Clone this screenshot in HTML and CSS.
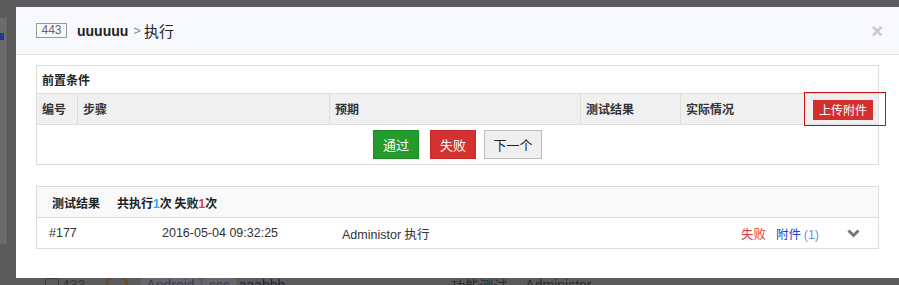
FILE: index.html
```html
<!DOCTYPE html>
<html>
<head>
<meta charset="utf-8">
<link rel="stylesheet" href="styles.css">
</head>
<body>
<div class="backdrop">
  <div class="topband"></div>
  <div class="main">
    <div class="sidebar"><div class="mark"></div></div>
    <div class="page">
      <div class="bgrow">
        <span class="chk"></span><span class="num">433</span>
        <span class="circ"></span>
        <span class="pill">Android</span><span class="pill small">ccc</span><span class="dark">aaabbb</span>
        <span class="type">功能测试</span><span class="who">Administor</span>
      </div>
    </div>
  </div>
</div>

<div class="dialog">
  <div class="dlg-head">
    <div class="title">
      <span class="badge">443</span>
      <span class="name">uuuuuu</span>
      <span class="sep">&gt;</span>
      <span class="act">执行</span>
    </div>
    <span class="close">×</span>
  </div>
  <div class="dlg-body">
    <div class="panel">
      <div class="cond">前置条件</div>
      <div class="thead">
        <div class="th">编号</div>
        <div class="th">步骤</div>
        <div class="th">预期</div>
        <div class="th">测试结果</div>
        <div class="th last">实际情况<span class="upload">上传附件</span><span class="annot"></span></div>
      </div>
      <div class="actions">
        <button class="btn pass">通过</button>
        <button class="btn fail">失败</button>
        <button class="btn next">下一个</button>
      </div>
    </div>

    <div class="panel results">
      <div class="rhead">
        <span class="rtitle">测试结果</span>
        <span class="rsum">共执行<b class="blue">1</b>次 失败<b class="red">1</b>次</span>
      </div>
      <div class="rrow">
        <span class="rid">#177</span>
        <span class="rdate">2016-05-04 09:32:25</span>
        <span class="ruser">Administor 执行</span>
        <span class="rstate">失败</span>
        <span class="ratt">附件 <span class="cnt">(1)</span></span>
        <svg class="chev" width="13" height="9" viewBox="0 0 13 9"><path d="M1.5 1.5 L6.5 6.5 L11.5 1.5" fill="none" stroke="#777" stroke-width="3"/></svg>
      </div>
    </div>
  </div>
</div>
</body>
</html>
```

FILE: styles.css
```css
html, body {
  margin: 0;
  padding: 0;
  width: 899px;
  height: 285px;
  overflow: hidden;
  background: #5b5b5b;
  font-family: "Liberation Sans", Arial, "Noto Sans CJK SC", sans-serif;
  position: relative;
}

.backdrop {
  display: flex;
  flex-direction: column;
  height: 285px;
}
.topband {
  height: 7px;
  background: #4f4f4f;
}
.main {
  display: flex;
  flex: 1;
}
.sidebar {
  width: 8px;
  height: 226px;
  margin-top: 18px;
  background: #6b6b6b;
  border-right: 1px solid #555;
  padding-top: 15px;
  box-sizing: border-box;
}
.mark {
  width: 4px;
  height: 7px;
  background: #1d3a8a;
}
.page {
  flex: 1;
  padding-top: 274px;
  padding-left: 37px;
}
.bgrow {
  display: flex;
  align-items: center;
  height: 22px;
  font-size: 14px;
  color: #333;
}
.chk {
  width: 12px;
  height: 12px;
  border: 1px solid #3e3e3e;
  border-radius: 2px;
}
.num { margin-left: 3px; }
.circ {
  width: 18px;
  height: 18px;
  border: 2px solid #6b4a1e;
  border-radius: 50%;
  margin-left: 21px;
}
.pill {
  background: #66676e;
  border-radius: 10px;
  padding: 2px 6px;
  color: #3a3a4c;
  margin-left: 12px;
}
.pill.small { margin-left: 1px; padding: 2px 7px; }
.dark { color: #1f2035; margin-left: 2px; }
.type { margin-left: 166px; color: #2a2a2a; }
.who { margin-left: 18px; color: #2a2a2a; }

/* dialog overlays the page */
.dialog {
  position: absolute;
  left: 16px;
  top: 7px;
  width: 883px;
  background: #fff;
}
.dlg-head {
  height: 47px;
  background: #f8f9fc;
  border-bottom: 1px solid #e3e3e3;
  display: flex;
  align-items: center;
  justify-content: space-between;
  padding: 0 16px 0 20px;
}
.title {
  display: flex;
  align-items: center;
}
.badge {
  box-sizing: border-box;
  width: 31px;
  height: 15px;
  border: 1px solid #9a9a9a;
  font-size: 12px;
  line-height: 13px;
  color: #666;
  text-align: center;
  margin-right: 10px;
}
.name {
  font-weight: bold;
  font-size: 14px;
  color: #222;
}
.sep {
  color: #888;
  font-size: 13px;
  margin: 0 3px 0 5px;
}
.act {
  font-family: "Noto Sans CJK SC", sans-serif;
  font-size: 15px;
  color: #222;
}
.close {
  font-size: 20px;
  font-weight: bold;
  color: #c8c8c8;
  line-height: 20px;
  margin-top: 1px;
}

.dlg-body {
  padding: 10px 20px 29px;
}
.panel {
  border: 1px solid #ddd;
}
.cond {
  height: 27px;
  line-height: 27px;
  padding-left: 5px;
  font-family: "Noto Sans CJK SC", sans-serif;
  font-size: 12px;
  font-weight: bold;
  color: #222;
  border-bottom: 1px solid #ddd;
}
.thead {
  display: grid;
  grid-template-columns: 41px 252px 251px 100px 1fr;
  background: #f0f0f0;
  border-bottom: 1px solid #ddd;
  height: 30px;
}
.th {
  border-right: 1px solid #ddd;
  padding-left: 5px;
  font-family: "Noto Sans CJK SC", sans-serif;
  font-size: 12px;
  font-weight: bold;
  color: #333;
  line-height: 28px;
  position: relative;
  display: flex;
  align-items: center;
}
.th.last {
  border-right: none;
  justify-content: space-between;
  padding-right: 5px;
}
.upload {
  background: #d32f2f;
  color: #fff;
  font-weight: normal;
  font-size: 12px;
  width: 60px;
  height: 20px;
  line-height: 20px;
  text-align: center;
  margin-top: 2px;
}
.annot {
  position: absolute;
  right: -8px;
  top: -2px;
  width: 80px;
  height: 32px;
  border: 1px solid #d01010;
}
.actions {
  height: 39px;
  display: flex;
  justify-content: center;
  align-items: flex-start;
  padding-top: 5px;
  box-sizing: border-box;
}
.btn {
  font-family: "Noto Sans CJK SC", sans-serif;
  font-size: 13px;
  height: 29px;
  border: 1px solid;
  padding: 0;
  margin: 0;
  cursor: pointer;
}
.pass {
  width: 46px;
  background: #259b2d;
  border-color: #1e8a25;
  color: #fff;
  margin-right: 11px;
}
.fail {
  width: 46px;
  background: #d33230;
  border-color: #c32a28;
  color: #fff;
  margin-right: 8px;
}
.next {
  width: 58px;
  background: #efefef;
  border-color: #bbb;
  color: #222;
}

.results {
  margin-top: 21px;
}
.rhead {
  height: 30px;
  background: #f9f9f9;
  border-bottom: 1px solid #ddd;
  display: flex;
  align-items: center;
  padding-left: 15px;
  font-family: "Noto Sans CJK SC", sans-serif;
  font-size: 12px;
  font-weight: bold;
  color: #222;
}
.rtitle { margin-right: 17px; }
.rsum b { font-family: "Liberation Sans", sans-serif; }
.blue { color: #36a9dc; }
.red { color: #e23b3b; }
.rrow {
  height: 30px;
  display: flex;
  align-items: center;
  padding-left: 12px;
  font-size: 12.5px;
  color: #333;
}
.rid { width: 113px; }
.rdate { width: 180px; }
.ruser { flex: 1; }
.rstate {
  color: #e23b3b;
  font-family: "Noto Sans CJK SC", sans-serif;
  font-size: 12.5px;
  margin-right: 10px;
}
.ratt {
  color: #1746c9;
  font-family: "Noto Sans CJK SC", sans-serif;
  font-size: 12.5px;
  margin-right: 28px;
}
.cnt {
  color: #6b8fe3;
  font-family: "Liberation Sans", sans-serif;
}
.chev {
  margin-right: 18px;
}
```
